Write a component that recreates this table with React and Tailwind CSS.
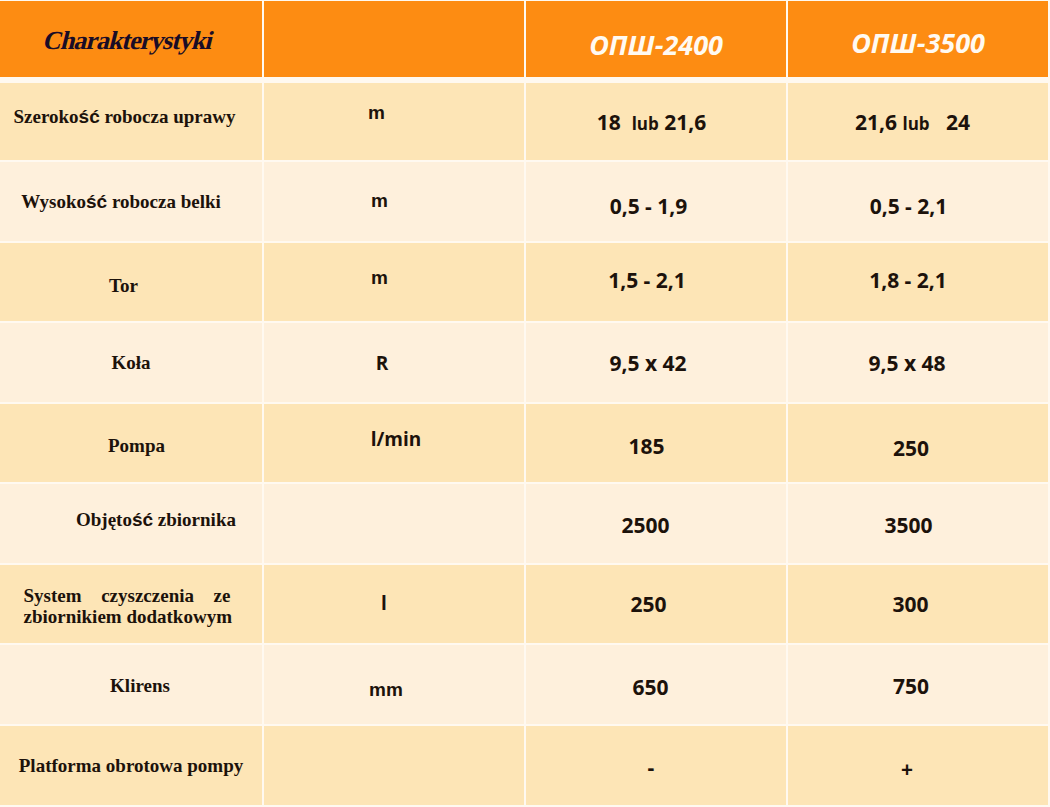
import React from "react";

const serif = "font-['Liberation_Serif','Times_New_Roman',serif] font-bold text-[19px] leading-[21px]";
const sansBold = "font-['Liberation_Sans',Arial,sans-serif] font-bold";
const open = "font-['Open_Sans',sans-serif] font-bold";

function Sc({ children }) {
  return <span className={sansBold}>{children}</span>;
}

const rows = [
  {
    bg: "bg-[#fde5b6]",
    h: "h-[77px]",
    label: <>Szeroko<Sc>ść</Sc> robocza uprawy</>,
    lc: "pr-[13px] pb-[11px]",
    unit: <span className={`${sansBold} text-[19px]`}>m</span>,
    uc: "pr-[35px] pb-[17px]",
    a: <>18&nbsp;&nbsp;<span className="text-[17px]">lub</span> 21,6</>,
    ac: "pr-[9px] pt-[3px]",
    b: <>21,6 <span className="text-[17px]">lub</span>&nbsp;&nbsp; 24</>,
    bc: "pr-[11px] pt-[3px]",
  },
  {
    bg: "bg-[#fef0dc]",
    h: "h-[79px]",
    label: <>Wysoko<Sc>ść</Sc> robocza belki</>,
    lc: "pr-[20px]",
    unit: <span className={`${sansBold} text-[19px]`}>m</span>,
    uc: "pr-[29px]",
    a: "0,5 - 1,9",
    ac: "pr-[15px] pt-[11px]",
    b: "0,5 - 2,1",
    bc: "pr-[19px] pt-[11px]",
  },
  {
    bg: "bg-[#fde5b6]",
    h: "h-[78px]",
    label: "Tor",
    lc: "pr-[15px] pt-[7px]",
    unit: <span className={`${sansBold} text-[19px]`}>m</span>,
    uc: "pr-[29px] pb-[7px]",
    a: "1,5 - 2,1",
    ac: "pr-[18px] pb-[3px]",
    b: "1,8 - 2,1",
    bc: "pr-[20px] pb-[3px]",
  },
  {
    bg: "bg-[#fef0dc]",
    h: "h-[79px]",
    label: "Koła",
    lc: "",
    unit: <span className={`${open} text-[19px]`}>R</span>,
    uc: "pr-[24px] pt-[2px]",
    a: "9,5 x 42",
    ac: "pr-[16px] pt-[2px]",
    b: "9,5 x 48",
    bc: "pr-[22px] pt-[2px]",
  },
  {
    bg: "bg-[#fde5b6]",
    h: "h-[78px]",
    label: "Pompa",
    lc: "pl-[11px] pt-[5px]",
    unit: <span className={`${open} text-[19px]`}>l/min</span>,
    uc: "pl-[4px] pb-[7px]",
    a: "185",
    ac: "pr-[19px] pt-[7px]",
    b: "250",
    bc: "pr-[14px] pt-[11px]",
  },
  {
    bg: "bg-[#fef0dc]",
    h: "h-[79px]",
    label: <>Objęto<Sc>ść</Sc> zbiornika</>,
    lc: "pl-[50px] pb-[9px]",
    unit: null,
    uc: "",
    a: "2500",
    ac: "pr-[21px] pt-[5px]",
    b: "3500",
    bc: "pr-[19px] pt-[5px]",
  },
  {
    bg: "bg-[#fde5b6]",
    h: "h-[78px]",
    label: (
      <div className="w-[207px] text-justify [text-align-last:justify]">
        <div className="whitespace-nowrap [text-align-last:justify]">System czyszczenia ze</div>
        <div className="whitespace-nowrap text-left [text-align-last:left]">zbiornikiem dodatkowym</div>
      </div>
    ),
    lc: "pr-[8px] pt-[3px]",
    unit: <span className={`${open} text-[19px]`}>l</span>,
    uc: "pr-[20px] pb-[2px]",
    a: "250",
    ac: "pr-[15px] pt-[2px]",
    b: "300",
    bc: "pr-[15px] pt-[2px]",
  },
  {
    bg: "bg-[#fef0dc]",
    h: "h-[79px]",
    label: "Klirens",
    lc: "pl-[18px] pt-[2px]",
    unit: <span className={`${sansBold} text-[19px]`}>mm</span>,
    uc: "pr-[16px] pt-[12px]",
    a: "650",
    ac: "pr-[11px] pt-[6px]",
    b: "750",
    bc: "pr-[14px] pt-[4px]",
  },
  {
    bg: "bg-[#fde5b6]",
    h: "h-[79px]",
    label: "Platforma obrotowa pompy",
    lc: "",
    unit: null,
    uc: "",
    a: "-",
    ac: "pr-[10px] pt-[4px]",
    b: "+",
    bc: "pr-[22px] pt-[8px]",
  },
];

export default function App() {
  return (
    <div className="w-[1050px] h-[807px] bg-[#fff9f0] pt-[1px] overflow-hidden text-[#1c120b]">
      <div className="grid grid-cols-[262px_260px_260px_260px] gap-x-[2px]">
        <div className="h-[76px] bg-[#fd8c12] flex items-center justify-center pr-[6px] pt-[2px]">
          <span className="inline-block font-['Liberation_Serif','Times_New_Roman',serif] font-bold not-italic text-[26px] tracking-[-1px] text-[#1a0c26] [transform:skewX(-14deg)]">
            Charakterystyki
          </span>
        </div>
        <div className="h-[76px] bg-[#fd8c12]" />
        <div className="h-[76px] bg-[#fd8c12] flex items-center justify-center pt-[12px]">
          <span className={`${open} italic text-[27px] text-[#fffaf2]`}>ОПШ-2400</span>
        </div>
        <div className="h-[76px] bg-[#fd8c12] flex items-center justify-center pt-[8px]">
          <span className={`${open} italic text-[27px] text-[#fffaf2]`}>ОПШ-3500</span>
        </div>
      </div>
      <div className="mt-[6px] flex flex-col gap-y-[2px]">
        {rows.map((r, i) => (
          <div key={i} className="grid grid-cols-[262px_260px_260px_260px] gap-x-[2px]">
            <div className={`${r.h} ${r.bg} flex items-center justify-center text-center ${serif} ${r.lc}`}>
              <div>{r.label}</div>
            </div>
            <div className={`${r.h} ${r.bg} flex items-center justify-center ${r.uc}`}>{r.unit}</div>
            <div className={`${r.h} ${r.bg} flex items-center justify-center ${open} text-[21px] ${r.ac}`}>
              <span>{r.a}</span>
            </div>
            <div className={`${r.h} ${r.bg} flex items-center justify-center ${open} text-[21px] ${r.bc}`}>
              <span>{r.b}</span>
            </div>
          </div>
        ))}
      </div>
    </div>
  );
}
